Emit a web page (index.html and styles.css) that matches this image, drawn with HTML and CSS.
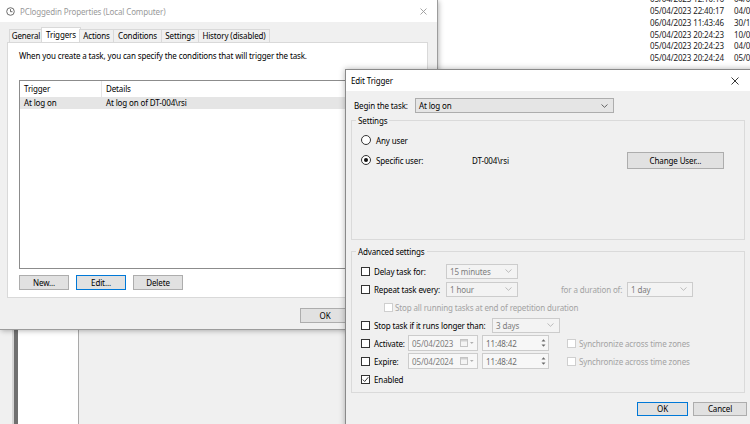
FILE: index.html
```html
<!DOCTYPE html>
<html>
<head>
<meta charset="utf-8">
<link rel="stylesheet" href="styles.css">
</head>
<body>
<div class="desktop">
  <div class="gutter"></div>
  <div class="rail"></div>
  <div class="nav"></div>
  <div class="main">
    <div class="list">
      <div class="rows">
        <div class="row"><span class="c1">05/04/2023 12:10:16</span><span>04/04/2023</span></div>
        <div class="row"><span class="c1">05/04/2023 22:40:17</span><span>04/04/2023</span></div>
        <div class="row"><span class="c1">06/04/2023 11:43:46</span><span>30/11/2022</span></div>
        <div class="row"><span class="c1">05/04/2023 20:24:23</span><span>10/03/2023</span></div>
        <div class="row"><span class="c1">05/04/2023 20:24:23</span><span>04/04/2023</span></div>
        <div class="row"><span class="c1">05/04/2023 20:24:24</span><span>05/04/2023</span></div>
      </div>
    </div>
    <div class="rest"></div>
  </div>
</div>

<div class="window props">
  <div class="titlebar">
    <svg class="appicon" width="9" height="9" viewBox="0 0 9 9"><circle cx="4.5" cy="4.5" r="3.8" fill="#fff" stroke="#6b6b6b" stroke-width="1"/><path d="M4.5 2.2V4.7H6.5" fill="none" stroke="#6b6b6b" stroke-width="1"/></svg>
    <span class="title inactive">PCloggedin Properties (Local Computer)</span>
    <svg class="close" width="7" height="7" viewBox="0 0 7 7"><path d="M0.5 0.5L6.5 6.5M6.5 0.5L0.5 6.5" stroke="#9a9a9a" stroke-width="0.9"/></svg>
  </div>
  <div class="tabs">
    <div class="tab t1">General</div>
    <div class="tab t2 sel">Triggers</div>
    <div class="tab t3">Actions</div>
    <div class="tab t4">Conditions</div>
    <div class="tab t5">Settings</div>
    <div class="tab t6">History (disabled)</div>
  </div>
  <div class="panel">
    <div class="intro">When you create a task, you can specify the conditions that will trigger the task.</div>
    <div class="listview">
      <div class="lv-head"><span class="lv-c1">Trigger</span><span class="lv-c2">Details</span></div>
      <div class="lv-row"><span class="lv-c1 plain">At log on</span><span class="lv-c2 plain">At log on of DT-004\rsi</span></div>
    </div>
    <div class="btnrow">
      <div class="btn w50">New...</div>
      <div class="btn w50 focus">Edit...</div>
      <div class="btn w50">Delete</div>
    </div>
  </div>
  <div class="pfoot">
    <div class="btn okp">OK</div>
  </div>
</div>

<div class="window edit">
  <div class="titlebar etitle">
    <span class="title">Edit Trigger</span>
    <svg class="close" width="8" height="8" viewBox="0 0 8 8"><path d="M0.5 0.5L7.5 7.5M7.5 0.5L0.5 7.5" stroke="#222" stroke-width="0.9"/></svg>
  </div>
  <div class="ebody">
    <div class="begin">
      <span class="begin-lbl">Begin the task:</span>
      <div class="combo main-combo"><span>At log on</span><svg width="7" height="4" viewBox="0 0 7 4"><path d="M0.5 0.5L3.5 3.3L6.5 0.5" fill="none" stroke="#555" stroke-width="0.9"/></svg></div>
    </div>

    <div class="group g1">
      <span class="legend">Settings</span>
      <div class="radiorow r-any"><span class="radio"></span><span>Any user</span></div>
      <div class="radiorow r-spec">
        <span class="radio on"></span><span class="spec-lbl">Specific user:</span><span class="spec-user">DT-004\rsi</span>
        <div class="btn chg">Change User...</div>
      </div>
    </div>

    <div class="group g2">
      <span class="legend">Advanced settings</span>
      <div class="arow">
        <span class="cb"></span><span class="lbl l-delay">Delay task for:</span>
        <div class="combo dis w72"><span>15 minutes</span><svg width="7" height="4" viewBox="0 0 7 4"><path d="M0.5 0.5L3.5 3.3L6.5 0.5" fill="none" stroke="#b5b5b5" stroke-width="0.9"/></svg></div>
      </div>
      <div class="arow">
        <span class="cb"></span><span class="lbl l-delay">Repeat task every:</span>
        <div class="combo dis w72"><span>1 hour</span><svg width="7" height="4" viewBox="0 0 7 4"><path d="M0.5 0.5L3.5 3.3L6.5 0.5" fill="none" stroke="#b5b5b5" stroke-width="0.9"/></svg></div>
        <span class="distext dur">for a duration of:</span>
        <div class="combo dis w66"><span>1 day</span><svg width="7" height="4" viewBox="0 0 7 4"><path d="M0.5 0.5L3.5 3.3L6.5 0.5" fill="none" stroke="#b5b5b5" stroke-width="0.9"/></svg></div>
      </div>
      <div class="arow indent">
        <span class="cb dis"></span><span class="distext">Stop all running tasks at end of repetition duration</span>
      </div>
      <div class="arow">
        <span class="cb"></span><span class="lbl l-stop">Stop task if it runs longer than:</span>
        <div class="combo dis w68"><span>3 days</span><svg width="7" height="4" viewBox="0 0 7 4"><path d="M0.5 0.5L3.5 3.3L6.5 0.5" fill="none" stroke="#b5b5b5" stroke-width="0.9"/></svg></div>
      </div>
      <div class="arow">
        <span class="cb"></span><span class="lbl l-act">Activate:</span>
        <div class="field date"><span>05/04/2023</span><span class="cal"><svg width="14" height="8" viewBox="0 0 14 8"><rect x="0.5" y="0.5" width="7" height="7" fill="#f4f4f4" stroke="#c4c4c4"/><rect x="1" y="1" width="6" height="1.5" fill="#d0d0d0"/><path d="M10 3L11.8 5L13.6 3Z" fill="#b0b0b0"/></svg></span></div>
        <div class="field time"><span>11:48:42</span><span class="spin"><svg width="5" height="10" viewBox="0 0 5 10"><path d="M0.5 3.5L2.5 1.3L4.5 3.5Z M0.5 6.5L2.5 8.7L4.5 6.5Z" fill="#6a6a6a"/></svg></span></div>
        <span class="cb dis sync"></span><span class="distext">Synchronize across time zones</span>
      </div>
      <div class="arow">
        <span class="cb"></span><span class="lbl l-act">Expire:</span>
        <div class="field date"><span>05/04/2024</span><span class="cal"><svg width="14" height="8" viewBox="0 0 14 8"><rect x="0.5" y="0.5" width="7" height="7" fill="#f4f4f4" stroke="#c4c4c4"/><rect x="1" y="1" width="6" height="1.5" fill="#d0d0d0"/><path d="M10 3L11.8 5L13.6 3Z" fill="#b0b0b0"/></svg></span></div>
        <div class="field time"><span>11:48:42</span><span class="spin"><svg width="5" height="10" viewBox="0 0 5 10"><path d="M0.5 3.5L2.5 1.3L4.5 3.5Z M0.5 6.5L2.5 8.7L4.5 6.5Z" fill="#6a6a6a"/></svg></span></div>
        <span class="cb dis sync"></span><span class="distext">Synchronize across time zones</span>
      </div>
      <div class="arow">
        <span class="cb on"><svg width="7" height="7" viewBox="0 0 7 7"><path d="M0.8 3.6L2.7 5.5L6.3 1.2" fill="none" stroke="#222" stroke-width="0.9"/></svg></span><span class="lbl">Enabled</span>
      </div>
    </div>

    <div class="ebtns">
      <div class="btn ok focus">OK</div>
      <div class="btn cancel">Cancel</div>
    </div>
  </div>
</div>
</body>
</html>
```
FILE: styles.css
```css
* { box-sizing: border-box; }
body {
  margin: 0;
  width: 750px;
  height: 424px;
  overflow: hidden;
  position: relative;
  background: #f0f0f0;
  font-family: "Noto Sans", sans-serif;
  font-size: 8px;
  letter-spacing: -0.13px;
  color: #000;
}

/* background application */
.desktop { position: absolute; inset: 0; display: flex; }
.gutter { flex: none; width: 12px; background: #f0f0f0; }
.rail { flex: none; width: 6px; border-left: 2px solid #d6d6d6; background: #707070; }
.nav { flex: none; width: 61px; background: #fff; border-right: 1px solid #a9a9a9; }
.main { flex: 1; min-width: 0; display: flex; flex-direction: column; }
.list { height: 69px; background: #fff; overflow: hidden; }
.rows { margin: -6.6px 0 0 571px; color: #222; }
.row { display: flex; height: 11.75px; line-height: 11.75px; white-space: nowrap; }
.c1 { width: 84px; flex: none; }
.rest { flex: 1; background: #f0f0f0; }

/* windows */
.window { position: absolute; background: #f0f0f0; }
.titlebar { display: flex; align-items: center; background: #fff; }
.title { flex: 1; }
.inactive { color: #9a9a9a; }

.props {
  left: 0; top: 0; width: 438px; height: 330px;
  border-right: 1px solid #9c9c9c;
  border-bottom: 1px solid #9c9c9c;
  box-shadow: 1px 1px 5px rgba(0,0,0,0.28);
  display: flex; flex-direction: column;
}
.props .titlebar { height: 22px; padding: 0 10px 0 6px; }
.appicon { margin-right: 5px; }

.tabs { display: flex; margin: 7px 0 0 10px; height: 13px; position: relative; z-index: 1; }
.tab {
  height: 13px; line-height: 12px; text-align: center;
  border: 1px solid #d9d9d9; border-bottom: none; margin-left: -1px;
  background: #f0f0f0;
}
.tab.sel { background: #fff; height: 15px; margin-top: -2px; line-height: 14px; margin-left: -2px; margin-right: -1px; }
.t1 { width: 34px; }
.t2 { width: 40px; }
.t3 { width: 35px; }
.t4 { width: 49px; }
.t5 { width: 38px; }
.t6 { width: 72px; }

.panel {
  margin-left: 7px; width: 421px; height: 256px;
  background: #fff; border: 1px solid #d9d9d9;
  padding: 7px 0 0 11px;
}
.intro { line-height: 11px; }
.listview {
  margin-top: 19px; width: 398px; height: 189px;
  border: 1px solid #8c8c8c; background: #fff;
}
.lv-head { display: flex; height: 16px; line-height: 15px; }
.lv-c1 { width: 82px; padding-left: 4px; border-right: 1px solid #e5e5e5; }
.lv-c2 { padding-left: 4px; }
.lv-c1.plain { border-right-color: transparent; }
.lv-row { display: flex; height: 12px; line-height: 12px; background: #e5e5e5; }

.btnrow { display: flex; gap: 7px; margin-top: 6px; }
.btn {
  height: 15px; line-height: 13px; text-align: center;
  background: #e1e1e1; border: 1px solid #adadad;
}
.btn.focus { border-color: #0078d7; }
.w50 { width: 50px; }
.pfoot { margin: 10px 0 0 300px; }
.okp { width: 50px; }

/* edit trigger */
.edit {
  left: 345px; top: 69px; width: 412px; height: 360px;
  border: 1px solid #8a8a8a;
  box-shadow: 0 0 6px rgba(0,0,0,0.3);
}
.etitle { height: 21px; padding: 0 0 0 5px; }
.etitle .close { margin-right: 17px; }
.ebody { padding: 0 0 0 5px; }
.begin { display: flex; align-items: center; margin: 7px 0 0 3px; height: 15px; }
.begin-lbl { width: 61px; }
.combo {
  display: flex; align-items: center; justify-content: space-between;
  height: 15px; padding: 0 5px 0 3px;
  border: 1px solid #adadad; background: #e5e5e5;
}
.main-combo { width: 199px; }

.group {
  border: 1px solid #dadada; width: 394px;
  display: flex; flex-direction: column;
}
.legend {
  align-self: flex-start; line-height: 11px; height: 11px;
  margin: -6px 0 0 4px; padding: 0 2px; background: #f0f0f0;
}
.g1 { margin-top: 7px; height: 120px; }
.radiorow { display: flex; align-items: center; height: 12px; padding-left: 9px; }
.r-any { margin-top: 8px; }
.r-spec { margin-top: 8px; }
.radio {
  width: 10px; height: 10px; border-radius: 50%;
  border: 1px solid #333; background: #fff; margin-right: 5px;
  display: flex; align-items: center; justify-content: center;
}
.radio.on::after { content: ""; width: 4px; height: 4px; border-radius: 50%; background: #111; }
.spec-lbl { width: 96px; }
.spec-user { width: 155px; }
.btn.chg { width: 97px; height: 17px; line-height: 15px; }

.g2 { margin-top: 11px; height: 142px; }
.arow { display: flex; align-items: center; height: 16px; margin-top: 2px; padding-left: 9px; white-space: nowrap; }
.g2 .legend + .arow { margin-top: 6px; }
.cb {
  width: 9px; height: 9px; border: 1px solid #333; background: #fff; margin-right: 4px;
  display: flex; align-items: center; justify-content: center; flex: none;
}
.cb.dis { border-color: #cfcfcf; }
.indent { padding-left: 32px; }
.indent .cb { margin-right: 2px; }
.lbl { flex: none; }
.l-delay { width: 72px; }
.l-stop { width: 118px; }
.l-act { width: 34px; }
.distext { color: #a3a3a3; }
.combo.dis { border-color: #cccccc; background: #f3f3f3; color: #7d7d7d; }
.w72 { width: 72px; }
.w66 { width: 66px; }
.w68 { width: 68px; }
.dur { width: 66px; margin-left: 43px; }

.field {
  display: flex; align-items: center; justify-content: space-between;
  height: 16px; padding: 0 2px 0 3px;
  border: 1px solid #cccccc; background: #f7f7f7; color: #7d7d7d;
}
.date { width: 70px; }
.cal { display: flex; padding-right: 1px; }
.time { width: 67px; margin-left: 4px; color: #6d6d6d; }
.spin { display: flex; }
.sync { margin-left: 18px; margin-right: 3px; }

.ebtns { display: flex; gap: 5px; margin: 9px 0 0 286px; }
.btn.ok { width: 51px; height: 14px; line-height: 12px; }
.btn.cancel { width: 54px; height: 14px; line-height: 12px; }
```
